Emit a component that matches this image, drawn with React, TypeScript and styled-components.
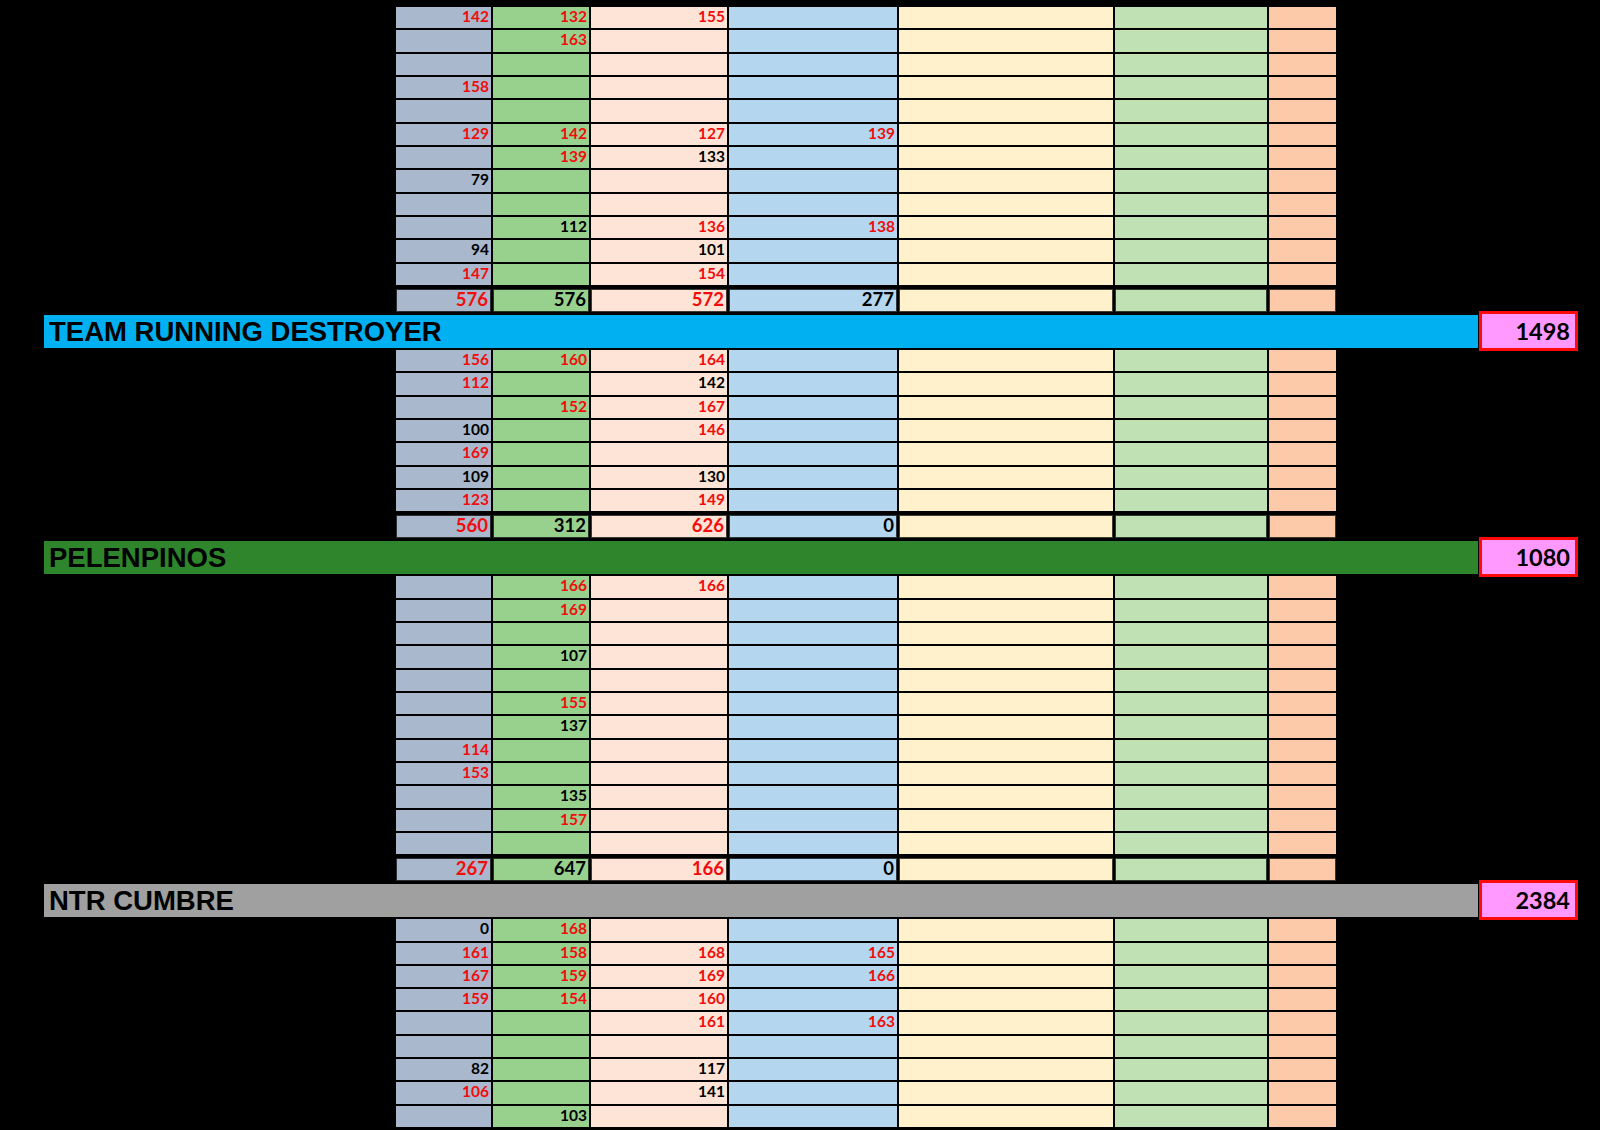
import React from 'react';
import styled, { createGlobalStyle } from 'styled-components';

type Val = [number, 'r' | 'k'] | null;

interface Block {
  name?: string;
  score?: number;
  bar?: string;
  rows: Val[][];
  total?: Val[];
}

const r = (n: number): Val => [n, 'r'];
const k = (n: number): Val => [n, 'k'];
const _ = null;

const blocks: Block[] = [
  {
    rows: [
      [r(142), r(132), r(155), _],
      [_, r(163), _, _],
      [],
      [r(158)],
      [],
      [r(129), r(142), r(127), r(139)],
      [_, r(139), k(133)],
      [k(79)],
      [],
      [_, k(112), r(136), r(138)],
      [k(94), _, k(101)],
      [r(147), _, r(154)],
    ],
    total: [r(576), k(576), r(572), k(277)],
  },
  {
    name: 'TEAM RUNNING DESTROYER',
    score: 1498,
    bar: '#00b0f0',
    rows: [
      [r(156), r(160), r(164)],
      [r(112), _, k(142)],
      [_, r(152), r(167)],
      [k(100), _, r(146)],
      [r(169)],
      [k(109), _, k(130)],
      [r(123), _, r(149)],
    ],
    total: [r(560), k(312), r(626), k(0)],
  },
  {
    name: 'PELENPINOS',
    score: 1080,
    bar: '#2f852c',
    rows: [
      [_, r(166), r(166)],
      [_, r(169)],
      [],
      [_, k(107)],
      [],
      [_, r(155)],
      [_, k(137)],
      [r(114)],
      [r(153)],
      [_, k(135)],
      [_, r(157)],
      [],
    ],
    total: [r(267), k(647), r(166), k(0)],
  },
  {
    name: 'NTR CUMBRE',
    score: 2384,
    bar: '#a0a0a0',
    rows: [
      [k(0), r(168)],
      [r(161), r(158), r(168), r(165)],
      [r(167), r(159), r(169), r(166)],
      [r(159), r(154), r(160)],
      [_, _, r(161), r(163)],
      [],
      [k(82), _, k(117)],
      [r(106), _, k(141)],
      [_, k(103)],
    ],
  },
];

const colColors = ['#a9b8cc', '#98d08d', '#fde4d6', '#b4d6ee', '#fff1cb', '#bfe1b3', '#fccaa9'];

const GlobalStyle = createGlobalStyle`
  html, body {
    margin: 0;
    background: #000;
    overflow: hidden;
  }
`;

const Page = styled.div`
  width: 1600px;
  height: 1130px;
  padding-top: 7px;
  box-sizing: border-box;
  background: #000;
  display: flex;
  flex-direction: column;
`;

const Rows = styled.div`
  margin-left: 395px;
  width: 942px;
  display: flex;
  flex-direction: column;
  gap: 2px;
`;

const Row = styled.div<{ $total?: boolean }>`
  display: grid;
  grid-template-columns: 95px 96px 136px 168px 214px 152px 67px;
  column-gap: 2px;
  padding: 0 1px;
  height: ${p => (p.$total ? '23px' : '21.33px')};
  margin-top: ${p => (p.$total ? '2px' : '0')};
`;

const Cell = styled.div<{ $bg: string; $red?: boolean; $total?: boolean }>`
  background: ${p => p.$bg};
  color: ${p => (p.$red ? '#f20d0d' : '#000')};
  font-family: Lato, 'Open Sans', sans-serif;
  font-weight: 700;
  font-size: ${p => (p.$total ? '18.5px' : '15.5px')};
  line-height: ${p => (p.$total ? '20px' : '18px')};
  text-align: right;
  padding-right: ${p => (p.$total ? '3px' : '2px')};
  box-shadow: ${p => (p.$total ? 'inset 0 0 0 1px rgba(0,0,0,0.75)' : 'none')};
  overflow: hidden;
`;

const TeamBar = styled.div`
  display: flex;
  align-items: center;
  margin: 3px 0 2px 44px;
  height: 33px;
`;

const TeamName = styled.div<{ $bg: string }>`
  width: 1434px;
  height: 33px;
  background: ${p => p.$bg};
  color: #000;
  font-family: 'Liberation Sans', Arial, sans-serif;
  font-weight: 700;
  font-size: 27.5px;
  line-height: 34px;
  padding-left: 5px;
  box-sizing: border-box;
  white-space: nowrap;
`;

const ScoreBox = styled.div`
  width: 99px;
  height: 40px;
  margin: -4px 0 -3px 1px;
  box-sizing: border-box;
  border: 3px solid #ff0a0a;
  background: #ff99ff;
  color: #000;
  font-family: Lato, 'Open Sans', sans-serif;
  font-weight: 700;
  font-size: 23.5px;
  line-height: 34px;
  text-align: right;
  padding-right: 5px;
`;

const SheetRow: React.FC<{ values: Val[]; total?: boolean }> = ({ values, total }) => (
  <Row $total={total}>
    {colColors.map((bg, i) => {
      const v = values[i];
      return (
        <Cell key={i} $bg={bg} $red={v?.[1] === 'r'} $total={total}>
          {v ? v[0] : ''}
        </Cell>
      );
    })}
  </Row>
);

const App = () => (
  <Page>
    <GlobalStyle />
    {blocks.map((b, bi) => (
      <React.Fragment key={bi}>
        {b.name && (
          <TeamBar>
            <TeamName $bg={b.bar!}>{b.name}</TeamName>
            <ScoreBox>{b.score}</ScoreBox>
          </TeamBar>
        )}
        <Rows>
          {b.rows.map((row, ri) => (
            <SheetRow key={ri} values={row} />
          ))}
          {b.total && <SheetRow values={b.total} total />}
        </Rows>
      </React.Fragment>
    ))}
  </Page>
);

export default App;
